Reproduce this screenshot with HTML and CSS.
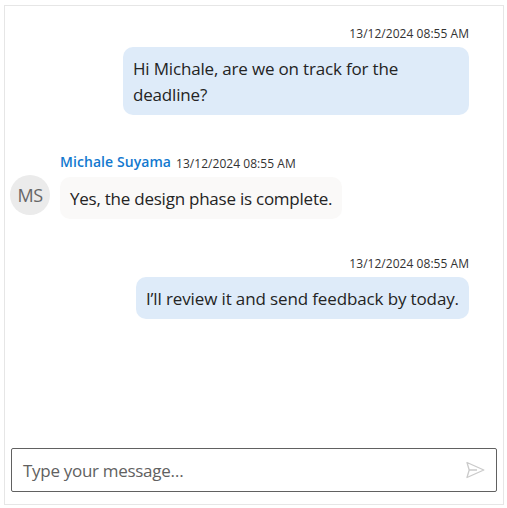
FILE: index.html
```html
<!DOCTYPE html>
<html lang="en">
<head>
<meta charset="utf-8">
<title>Chat</title>
<link rel="stylesheet" href="styles.css">
</head>
<body>
<main class="chat">
  <section class="messages">
    <article class="message sent first">
      <time>13/12/2024 08:55 AM</time>
      <p class="bubble">Hi Michale, are we on track for the<br>deadline?</p>
    </article>
    <article class="message received">
      <div class="avatar">MS</div>
      <div class="content">
        <header><strong class="name">Michale Suyama</strong><time>13/12/2024 08:55 AM</time></header>
        <p class="bubble">Yes, the design phase is complete.</p>
      </div>
    </article>
    <article class="message sent last">
      <time>13/12/2024 08:55 AM</time>
      <p class="bubble">I’ll review it and send feedback by today.</p>
    </article>
  </section>
  <footer class="composer">
    <span>Type your message…</span>
    <svg class="send" viewBox="0 0 20 18" width="20" height="18"><path d="M2 1.5 18.8 9 2 16.5 4.2 9ZM4.2 9H12"/></svg>
  </footer>
</main>
</body>
</html>
```
FILE: styles.css
```css
* { box-sizing: border-box; }
body { margin: 0; background: #fff; font-family: "Open Sans", "Noto Sans", sans-serif; color: #242424; }
p { margin: 0; }
.chat { width: 500px; height: 500px; margin: 5px 0 0 4px; border: 1px solid #e6e6e6; display: flex; flex-direction: column; padding: 19px 6px 12px 5px; }
.messages { flex: 1; display: flex; flex-direction: column; }
.message time { font-size: 12px; line-height: 18px; white-space: nowrap; letter-spacing: .04px; color: #333; }
.sent { display: flex; flex-direction: column; align-items: flex-end; padding-right: 28px; }
.sent time { margin-bottom: 4px; }
.bubble { font-size: 17px; line-height: 26px; padding: 9px 10px 7px; border-radius: 10px; white-space: nowrap; letter-spacing: -.18px; }
.sent .bubble { background: #deebf9; }
.first .bubble { width: 346px; height: 68px; }
.last .bubble { width: 333px; height: 42px; letter-spacing: -.13px; }
.received { display: flex; margin: 38px 0 36px; }
.avatar { width: 40px; height: 40px; margin: 22px 10px 0 0; border-radius: 50%; background: #ebebeb; color: #666; font-size: 18px; line-height: 40px; text-align: center; letter-spacing: -.5px; }
.received header { display: flex; align-items: center; height: 20px; margin-bottom: 4px; }
.received time { padding-top: 1px; }
.name { font-size: 14px; line-height: 18px; font-weight: 600; color: #1279cf; margin: -3px 5px 0 0; letter-spacing: .07px; }
.received .bubble { background: #faf9f8; width: 282px; height: 42px; letter-spacing: -.24px; }
.composer { height: 44px; border: 1px solid #616161; border-radius: 2px; display: flex; align-items: center; justify-content: space-between; padding: 0 11px; font-size: 17px; letter-spacing: -.3px; color: #616161; margin-left: 1px; }
.send { fill: none; stroke: #cacaca; stroke-width: 1.3; stroke-linejoin: round; }
```
